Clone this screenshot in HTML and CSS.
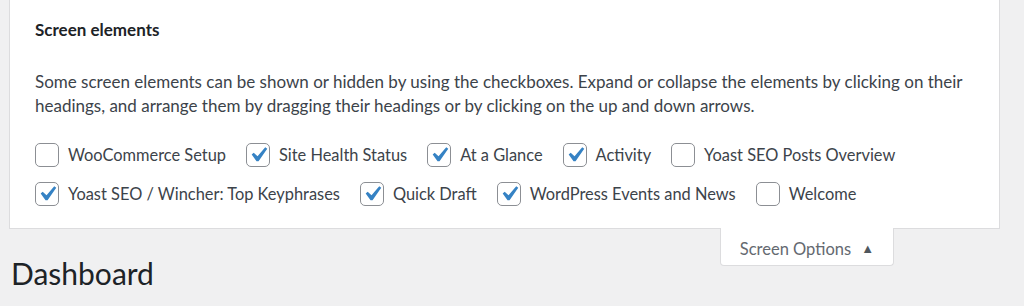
FILE: index.html
```html
<!DOCTYPE html>
<html lang="en">
<head>
    <meta charset="UTF-8">
    <title>Dashboard</title>
    <link rel="stylesheet" href="styles.css">
</head>
<body>
    <div class="screen-meta">
        <h5 class="meta-title">Screen elements</h5>
        <p class="meta-desc">Some screen elements can be shown or hidden by using the checkboxes. Expand or collapse the elements by clicking on their headings, and arrange them by dragging their headings or by clicking on the up and down arrows.</p>

        <div class="toggles">
            <label class="toggle"><span class="box"></span>WooCommerce Setup</label>
            <label class="toggle"><span class="box checked"><svg viewBox="0 0 20 20"><path d="M14.83 4.89l1.34.94-5.81 8.38H9.02L5.78 9.67l1.34-1.25 2.57 2.4z"/></svg></span>Site Health Status</label>
            <label class="toggle"><span class="box checked"><svg viewBox="0 0 20 20"><path d="M14.83 4.89l1.34.94-5.81 8.38H9.02L5.78 9.67l1.34-1.25 2.57 2.4z"/></svg></span>At a Glance</label>
            <label class="toggle"><span class="box checked"><svg viewBox="0 0 20 20"><path d="M14.83 4.89l1.34.94-5.81 8.38H9.02L5.78 9.67l1.34-1.25 2.57 2.4z"/></svg></span>Activity</label>
            <label class="toggle"><span class="box"></span>Yoast SEO Posts Overview</label>
        </div>
        <div class="toggles">
            <label class="toggle"><span class="box checked"><svg viewBox="0 0 20 20"><path d="M14.83 4.89l1.34.94-5.81 8.38H9.02L5.78 9.67l1.34-1.25 2.57 2.4z"/></svg></span>Yoast SEO / Wincher: Top Keyphrases</label>
            <label class="toggle"><span class="box checked"><svg viewBox="0 0 20 20"><path d="M14.83 4.89l1.34.94-5.81 8.38H9.02L5.78 9.67l1.34-1.25 2.57 2.4z"/></svg></span>Quick Draft</label>
            <label class="toggle"><span class="box checked"><svg viewBox="0 0 20 20"><path d="M14.83 4.89l1.34.94-5.81 8.38H9.02L5.78 9.67l1.34-1.25 2.57 2.4z"/></svg></span>WordPress Events and News</label>
            <label class="toggle"><span class="box"></span>Welcome</label>
        </div>
    </div>

    <div class="meta-links">
        <button class="meta-tab">Screen Options <span class="arrow">&#9650;</span></button>
    </div>

    <h1 class="page-title">Dashboard</h1>
</body>
</html>
```

FILE: styles.css
```css
body {
    margin: 0;
    height: 306px;
    overflow: hidden;
    background: #f0f0f1;
    font-family: 'Lato', sans-serif;
    color: #3c434a;
}

.screen-meta {
    margin-left: 9px;
    width: 964px;
    height: 228px;
    padding: 0 0 0 25px;
    background: #fff;
    border: 1px solid #dcdcde;
    border-top: none;
}

.meta-title {
    margin: 0;
    padding-top: 20px;
    font-size: 17px;
    font-weight: 700;
    line-height: 20px;
    color: #1d2327;
}

.meta-desc {
    margin: 30px 0 0;
    font-size: 17px;
    line-height: 24px;
    padding-right: 20px;
}

.toggles {
    display: flex;
    gap: 20px;
    margin-top: 25px;
}

.toggles + .toggles {
    margin-top: 15px;
}

.toggle {
    display: flex;
    align-items: center;
    gap: 9px;
    font-size: 16.4px;
    line-height: 24px;
}

.box {
    width: 22px;
    height: 22px;
    border: 1px solid #8c8f94;
    border-radius: 5px;
    position: relative;
    flex: none;
}

.box svg {
    position: absolute;
    left: -4px;
    top: -4px;
    width: 30px;
    height: 30px;
    fill: #3582c4;
}

.meta-links {
    display: flex;
    justify-content: flex-end;
    padding-right: 130px;
    margin-top: -1px;
}

.meta-tab {
    width: 174px;
    height: 38px;
    background: #fff;
    border: 1px solid #dcdcde;
    border-top: none;
    border-radius: 0 0 4px 4px;
    font-family: inherit;
    font-size: 16.5px;
    color: #646970;
    padding: 4px 0 0;
}

.arrow {
    font-size: 13px;
    margin-left: 6px;
    color: #50575e;
    vertical-align: 2px;
}

.page-title {
    margin: -11px 0 0 11px;
    font-size: 30px;
    font-weight: 400;
    line-height: 36px;
    color: #1d2327;
}
```
